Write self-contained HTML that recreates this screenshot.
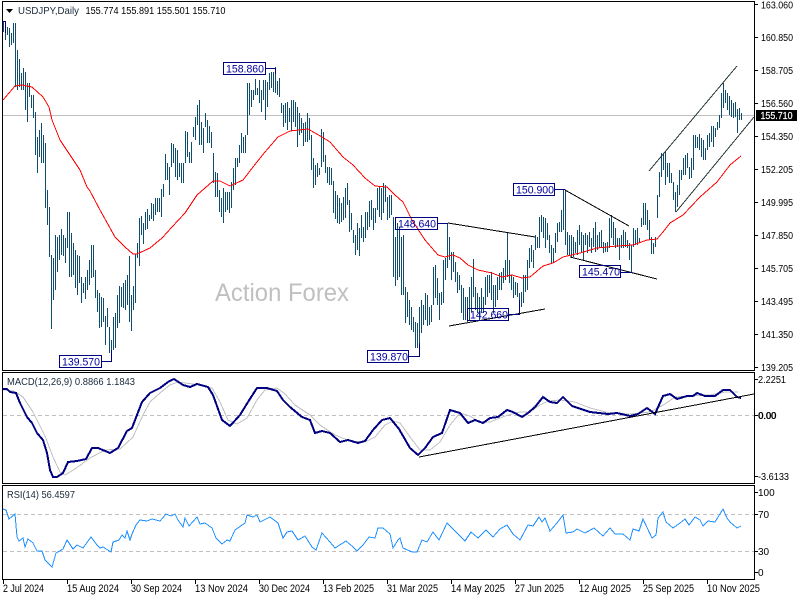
<!DOCTYPE html>
<html>
<head>
<meta charset="utf-8">
<title>USDJPY Daily</title>
<style>
html,body{margin:0;padding:0;background:#fff;width:800px;height:600px;overflow:hidden}
svg{display:block;position:absolute;left:0;top:0}
text{font-family:"Liberation Sans",sans-serif;fill:#000}
.ax{font-size:10px}
.lb{font-size:11px;fill:#0000a0}
.dt{font-size:11px}
</style>
</head>
<body>
<svg width="800" height="600" viewBox="0 0 800 600">
<rect width="800" height="600" fill="#fff"/>

<!-- price line -->
<path d="M2 115.5H754" stroke="#c0c0c0" fill="none" shape-rendering="crispEdges"/>

<!-- bars -->
<path transform="translate(.5,0)" shape-rendering="crispEdges" stroke="#0f4d6e" fill="none" d="M3 22V32M5 23V40M7 27V35M9 28V47M11 33V45M13 23V43M15 23V87M17 50V90M19 59V87M21 73V90M23 68V90M25 72V110M27 83V122M29 83V97M31 95V108M33 95V118M35 112V155M37 137V173M39 130V157M41 123V163M43 135V163M45 143V208M47 190V225M49 207V257M51 255V329M53 258V300M55 235V290M57 237V272M59 235V260M61 229V255M63 235V256M65 238V263M67 212V248M69 212V277M71 233V277M73 243V275M75 250V288M77 255V295M79 256V283M81 277V303M83 283V293M85 277V299M87 270V290M89 260V285M91 245V278M93 245V277M95 270V298M97 290V312M99 293V328M101 297V327M103 298V322M105 316V345M107 308V327M109 327V353M111 340V361M113 317V350M115 313V348M117 295V328M119 286V323M121 287V307M123 283V308M125 280V310M127 275V305M129 256V322M131 295V331M133 286V310M135 254V303M137 243V258M139 218V266M141 216V235M143 223V244M145 212V230M147 209V229M149 215V221M151 203V219M153 204V221M155 198V215M157 198V212M159 198V212M161 189V217M163 184V197M165 154V180M167 163V180M169 167V195M171 143V167M173 144V163M175 148V177M177 150V180M179 163V177M181 163V183M183 163V183M185 131V163M187 132V157M189 152V163M191 142V163M193 127V137M195 117V140M197 105V125M199 100V145M201 122V145M203 128V153M205 113V127M207 120V143M209 126V143M211 132V148M213 153V183M215 172V197M217 173V197M219 190V212M221 198V217M223 188V223M225 192V212M227 192V210M229 192V213M231 182V208M233 168V190M235 158V185M237 158V167M239 145V163M241 133V153M243 137V153M245 135V153M247 83V135M249 83V115M251 90V107M253 90V100M255 79V95M257 88V95M259 80V103M261 90V112M263 80V100M265 80V120M267 82V107M269 73V90M271 72V88M273 72V92M275 67V93M277 81V95M279 78V97M281 103V113M283 105V127M285 103V123M287 102V130M289 108V122M291 100V131M293 100V122M295 102V127M297 107V147M299 113V135M301 118V133M303 123V146M305 122V142M307 113V142M309 118V140M311 135V170M313 158V188M315 165V185M317 163V177M319 168V175M321 129V167M323 132V162M325 155V173M327 167V183M329 167V185M331 168V185M333 181V213M335 191V219M337 195V223M339 198V224M341 203V222M343 197V220M345 188V218M347 183V205M349 200V232M351 213V230M353 230V243M355 235V255M357 223V250M359 228V256M361 215V238M363 227V242M365 212V238M367 212V230M369 201V227M371 200V220M373 208V230M375 208V223M377 188V210M379 187V217M381 188V220M383 183V213M385 185V202M387 197V220M389 195V218M391 195V215M393 217V277M395 237V286M397 223V280M399 227V277M401 237V295M403 235V295M405 287V323M407 292V317M409 300V325M411 307V330M413 317V332M415 322V348M417 323V348M419 307V357M421 300V333M423 305V325M425 293V320M427 295V326M429 307V325M431 305V322M433 267V305M435 265V298M437 278V305M439 293V320M441 292V305M443 260V303M445 258V280M447 223V268M449 237V260M451 252V280M453 252V272M455 262V282M457 272V293M459 275V290M461 285V313M463 288V320M465 297V320M467 297V322M469 287V320M471 277V312M473 259V297M475 287V310M477 293V313M479 297V320M481 288V313M483 297V313M485 277V305M487 275V297M489 275V293M491 272V300M493 285V313M495 285V307M497 277V300M499 273V290M501 272V290M503 268V283M505 260V280M507 233V277M509 260V283M511 275V290M513 277V298M515 282V295M517 283V297M519 293V313M521 292V307M523 275V303M525 275V292M527 260V290M529 248V268M531 245V262M533 250V268M535 235V250M537 237V248M539 217V248M541 215V232M543 217V238M545 218V248M547 223V240M549 235V253M551 245V263M553 248V263M555 233V253M557 223V242M559 222V232M561 210V232M563 190V230M565 190V245M567 232V255M569 235V255M571 235V257M573 237V257M575 242V253M577 230V255M579 225V245M581 232V252M583 235V260M585 233V245M587 235V253M589 232V247M591 238V253M593 228V247M595 222V252M597 235V250M599 232V248M601 230V248M603 242V253M605 243V252M607 242V252M609 218V248M611 215V238M613 222V245M615 228V248M617 238V247M619 238V260M621 235V248M623 230V248M625 232V247M627 240V248M629 243V260M631 245V272M633 228V247M635 230V245M637 228V245M639 238V243M641 218V227M643 203V225M645 203V225M647 210V230M649 220V240M651 237V254M653 243V254M655 237V247M657 195V218M659 172V197M661 153V177M663 153V170M665 152V185M667 163V177M669 163V183M671 173V183M673 182V200M675 192V212M677 185V207M679 170V195M681 170V180M683 158V175M685 155V175M687 153V168M689 167V179M691 158V178M693 135V170M695 135V148M697 137V148M699 134V150M701 138V157M703 140V160M705 148V160M707 135V150M709 133V147M711 126V142M713 126V147M715 128V137M717 122V130M719 115V128M721 93V118M723 83V108M725 90V103M727 93V110M729 96V115M731 100V117M733 103V118M735 102V117M737 109V133M739 108V120M741 113V120"/>

<!-- red MA -->
<polyline fill="none" stroke="#f00" stroke-width="1" shape-rendering="crispEdges" points="3,100 15,86 22,85 32,87 43,97 49,107 52,120 60,140 70,155 80,170 87,187 90,191 100,210 115,237 125,247 133,254 137,254 150,248 162,238 172,227 185,213 197,195 213,181 220,181 230,186 243,180 253,167 265,152 278,137 290,131 308,129 322,137 330,142 343,157 353,165 365,178 375,186 387,187 395,195 403,202 412,220 425,240 438,255 445,257 453,255 460,258 468,265 478,270 492,273 502,277 512,275 522,278 530,277 543,266 553,263 563,257 580,253 597,248 617,246 633,245 647,240 657,239 663,232 670,223 683,215 700,197 717,182 730,165 741,156"/>

<!-- trend lines -->
<g fill="none" stroke="#000" stroke-width="1" shape-rendering="crispEdges">
<path d="M448 223L535 237"/>
<path d="M449 326L545 309"/>
<path d="M565 190L629 226"/>
<path d="M570 257L657 279"/>
</g>
<g fill="none" stroke="#2a3a3a" stroke-width="1" shape-rendering="crispEdges">
<path d="M649 171L737 66"/>
<path d="M676 212L754 117"/>
</g>

<!-- label boxes and connectors -->
<g fill="none" stroke="#000080" stroke-width="1" shape-rendering="crispEdges">
<path d="M3 21.5H5.5V33"/>
<rect x="223.5" y="62.5" width="42" height="12"/><path d="M266 68.5H275.5V74"/>
<rect x="59.5" y="355.5" width="42" height="12"/><path d="M102 361.5H111.5V350"/>
<rect x="395.5" y="217.5" width="42" height="12"/><path d="M438 223.5H448"/>
<rect x="367.5" y="350.5" width="41" height="12"/><path d="M409 356.5H419.5V343"/>
<rect x="467.5" y="308.5" width="41" height="12"/><path d="M509 314.5H519.5V300"/>
<rect x="513.5" y="183.5" width="41" height="12"/><path d="M555 189.5H565.5"/>
<rect x="579.5" y="265.5" width="41" height="12"/><path d="M621 272.5H631.5"/>
</g>
<g class="lbs">
<text class="lb" x="226" y="72.5" textLength="38" lengthAdjust="spacingAndGlyphs">158.860</text>
<text class="lb" x="62" y="365.5" textLength="38" lengthAdjust="spacingAndGlyphs">139.570</text>
<text class="lb" x="398" y="227.5" textLength="38" lengthAdjust="spacingAndGlyphs">148.640</text>
<text class="lb" x="370" y="360.5" textLength="38" lengthAdjust="spacingAndGlyphs">139.870</text>
<text class="lb" x="470" y="318.5" textLength="38" lengthAdjust="spacingAndGlyphs">142.660</text>
<text class="lb" x="516" y="193.5" textLength="38" lengthAdjust="spacingAndGlyphs">150.900</text>
<text class="lb" x="582" y="275.5" textLength="38" lengthAdjust="spacingAndGlyphs">145.470</text>
</g>

<!-- watermark -->
<text x="215" y="301" font-size="25" style="fill:#c0c0c0" textLength="134" lengthAdjust="spacingAndGlyphs">Action Forex</text>

<!-- legend -->
<path d="M6 9H13L9.5 13Z" fill="#000"/>
<text x="18" y="14" font-size="10.5" style="fill:#1a2a3a" textLength="61" lengthAdjust="spacingAndGlyphs">USDJPY,Daily</text>
<text x="85.5" y="14" font-size="10" textLength="140" lengthAdjust="spacingAndGlyphs">155.774 155.891 155.501 155.710</text>

<!-- frames -->
<g fill="none" stroke="#000" stroke-width="1" shape-rendering="crispEdges">
<rect x="2.5" y="1.5" width="752" height="369"/>
<rect x="2.5" y="372.5" width="752" height="111"/>
<rect x="2.5" y="485.5" width="752" height="94"/>
<path d="M754 4.5H758M754 37.5H758M754 70.5H758M754 103.5H758M754 136.5H758M754 169.5H758M754 202.5H758M754 235.5H758M754 268.5H758M754 301.5H758M754 334.5H758M754 367.5H758"/>
<path d="M754 379.5H758M754 415.5H758M754 476.5H758M754 492.5H758M754 514.5H758M754 551.5H758M754 572.5H758"/>
<path d="M3.5 580V584M67.5 580V584M131.5 580V584M195.5 580V584M259.5 580V584M323.5 580V584M387.5 580V584M451.5 580V584M515.5 580V584M579.5 580V584M643.5 580V584M707.5 580V584"/>
</g>

<!-- price axis -->
<g class="ax">
<text x="761" y="8.5" textLength="32" lengthAdjust="spacingAndGlyphs">163.060</text>
<text x="761" y="41" textLength="32" lengthAdjust="spacingAndGlyphs">160.850</text>
<text x="761" y="74" textLength="32" lengthAdjust="spacingAndGlyphs">158.705</text>
<text x="761" y="107" textLength="32" lengthAdjust="spacingAndGlyphs">156.560</text>
<text x="761" y="140" textLength="32" lengthAdjust="spacingAndGlyphs">154.350</text>
<text x="761" y="173" textLength="32" lengthAdjust="spacingAndGlyphs">152.205</text>
<text x="761" y="206" textLength="32" lengthAdjust="spacingAndGlyphs">149.995</text>
<text x="761" y="239" textLength="32" lengthAdjust="spacingAndGlyphs">147.850</text>
<text x="761" y="272" textLength="32" lengthAdjust="spacingAndGlyphs">145.705</text>
<text x="761" y="305" textLength="32" lengthAdjust="spacingAndGlyphs">143.495</text>
<text x="761" y="338" textLength="32" lengthAdjust="spacingAndGlyphs">141.350</text>
<text x="761" y="371" textLength="32" lengthAdjust="spacingAndGlyphs">139.205</text>
</g>
<rect x="756" y="110" width="41" height="11" fill="#000"/>
<text x="760.5" y="119" font-size="10" style="fill:#fff;stroke:#fff;stroke-width:.2" textLength="32" lengthAdjust="spacingAndGlyphs">155.710</text>

<!-- MACD -->
<path d="M3 415.5H754" stroke="#c0c0c0" stroke-dasharray="4 3" fill="none" shape-rendering="crispEdges"/>
<polyline fill="none" stroke="#c0c0c0" shape-rendering="crispEdges" points="3,390 14,391 23,397 33,412 45,436 53,457 60,472 65,475 75,469 90,458 105,450 120,449 133,437 143,415 150,402 160,393 170,385 178,382 200,385 212,388 220,402 228,420 237,424 247,418 257,400 265,390 277,388 285,394 295,405 310,415 320,425 335,435 350,441 365,442 375,437 385,425 393,421 400,423 410,437 420,450 430,450 440,442 450,425 460,413 470,416 480,422 490,422 505,416 520,412 530,412 540,405 548,401 560,400 575,402 590,408 610,413 630,414 650,412 665,404 675,397 690,396 710,395 725,392 738,392"/>
<polyline fill="none" stroke="#000080" stroke-width="2" shape-rendering="crispEdges" points="3,389 7,389 10,392 16,393 20,403 27,417 32,423 37,433 43,440 47,453 50,470 53,477 57,477 63,473 68,462 77,461 86,459 92,448 98,448 110,453 118,448 127,431 132,428 142,402 150,393 160,388 168,382 174,379 183,385 190,387 197,384 208,387 213,395 222,420 230,426 240,415 248,402 257,388 267,388 277,391 283,400 290,407 302,417 310,420 315,433 322,431 330,433 340,442 348,440 358,443 365,441 373,430 382,420 390,418 399,429 410,448 418,455 425,448 433,437 442,433 450,410 460,413 468,423 475,420 483,423 490,418 498,417 507,410 513,412 522,417 528,413 535,407 543,397 550,402 557,403 563,397 572,406 590,412 608,414 617,413 630,416 638,414 647,408 655,414 663,396 670,394 677,399 687,396 693,396 697,393 705,396 715,396 723,390 730,390 737,397 741,398"/>
<path d="M419 457L754 394" stroke="#000" stroke-width="1" fill="none" shape-rendering="crispEdges"/>
<text x="7" y="385" font-size="10" style="fill:#1a2a3a" textLength="128" lengthAdjust="spacingAndGlyphs">MACD(12,26,9) 0.8866 1.1843</text>
<text class="ax" x="758" y="383" textLength="28" lengthAdjust="spacingAndGlyphs">2.2251</text>
<text class="ax" x="758" y="419" textLength="18" lengthAdjust="spacingAndGlyphs">0.00</text>
<text class="ax" x="758.5" y="419" textLength="18" lengthAdjust="spacingAndGlyphs">0.00</text>
<text class="ax" x="758" y="480" textLength="31" lengthAdjust="spacingAndGlyphs">-3.6133</text>

<!-- RSI -->
<path d="M3 514.5H754M3 551.5H754" stroke="#c0c0c0" stroke-dasharray="4 3" fill="none" shape-rendering="crispEdges"/>
<polyline fill="none" stroke="#1e90ff" shape-rendering="crispEdges" points="3,509 6,510 9,519 15,514 17,537 19,541 23,538 25,547 28,539 33,543 37,551 42,551 45,560 52,567 56,553 63,549 67,540 73,549 77,545 83,548 91,537 97,545 100,548 103,547 111,552 113,542 119,540 122,535 125,538 127,531 130,540 132,534 136,525 140,520 147,521 152,519 160,521 166,514 171,516 175,514 178,520 183,527 185,518 189,526 197,517 200,524 205,523 212,528 216,538 222,544 227,540 230,541 235,530 245,523 247,515 253,517 257,515 260,522 270,517 278,523 283,538 287,532 292,531 298,540 305,536 312,547 316,550 322,533 330,542 335,548 346,541 353,547 357,551 363,545 369,537 375,538 378,528 383,528 390,534 393,548 398,540 400,538 403,548 412,552 417,552 422,540 427,542 433,532 439,540 447,523 458,534 465,541 471,532 478,538 486,530 493,537 500,529 507,525 513,534 520,540 528,525 533,526 539,517 542,522 545,518 550,531 557,523 563,515 566,533 573,532 577,529 585,533 594,528 603,536 610,528 615,534 623,534 630,540 633,529 639,531 643,519 652,538 656,535 658,518 663,512 666,522 673,528 680,523 685,519 689,525 695,517 700,520 703,526 708,521 715,522 723,509 727,518 730,522 737,528 741,526"/>
<text x="7" y="498" font-size="10" style="fill:#1a2a3a" textLength="68" lengthAdjust="spacingAndGlyphs">RSI(14) 56.4597</text>
<text class="ax" x="758" y="496">100</text>
<text class="ax" x="758" y="518">70</text>
<text class="ax" x="758" y="555">30</text>
<text class="ax" x="758" y="576">0</text>

<!-- dates -->
<g class="dt">
<text x="3" y="592" textLength="41" lengthAdjust="spacingAndGlyphs">2 Jul 2024</text>
<text x="67" y="592" textLength="52" lengthAdjust="spacingAndGlyphs">15 Aug 2024</text>
<text x="131" y="592" textLength="51" lengthAdjust="spacingAndGlyphs">30 Sep 2024</text>
<text x="195" y="592" textLength="53" lengthAdjust="spacingAndGlyphs">13 Nov 2024</text>
<text x="259" y="592" textLength="51" lengthAdjust="spacingAndGlyphs">30 Dec 2024</text>
<text x="323" y="592" textLength="51" lengthAdjust="spacingAndGlyphs">13 Feb 2025</text>
<text x="387" y="592" textLength="51" lengthAdjust="spacingAndGlyphs">31 Mar 2025</text>
<text x="451" y="592" textLength="54" lengthAdjust="spacingAndGlyphs">14 May 2025</text>
<text x="515" y="592" textLength="49" lengthAdjust="spacingAndGlyphs">27 Jun 2025</text>
<text x="579" y="592" textLength="52" lengthAdjust="spacingAndGlyphs">12 Aug 2025</text>
<text x="643" y="592" textLength="51" lengthAdjust="spacingAndGlyphs">25 Sep 2025</text>
<text x="707" y="592" textLength="53" lengthAdjust="spacingAndGlyphs">10 Nov 2025</text>
</g>
</svg>
</body>
</html>
